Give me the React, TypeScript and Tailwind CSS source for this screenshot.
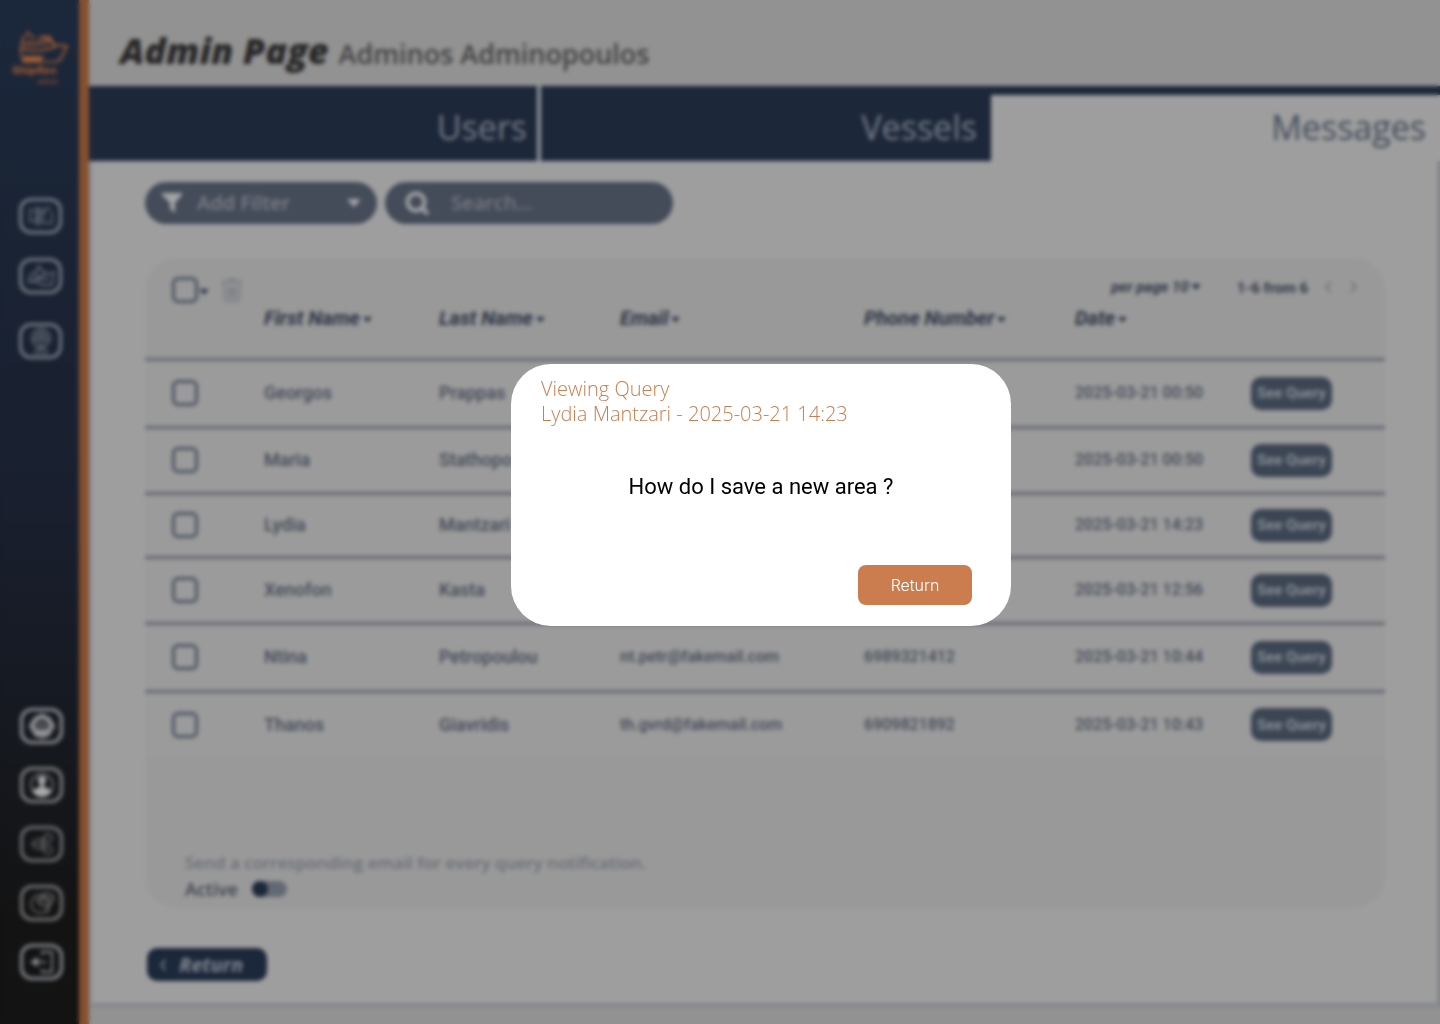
import React from "react";

const WORK = "font-['Open_Sans','Liberation_Sans',sans-serif]";

type Query = {
  first: string;
  last: string;
  email?: string;
  phone?: string;
  date: string;
  height: string;
};

const queries: Query[] = [
  { first: "Georgos", last: "Prappas", date: "2025-03-21 00:50", height: "h-[68px]" },
  { first: "Maria", last: "Stathopo", date: "2025-03-21 00:50", height: "h-[66px]" },
  { first: "Lydia", last: "Mantzari", date: "2025-03-21 14:23", height: "h-[64px]" },
  { first: "Xenofon", last: "Kasta", date: "2025-03-21 12:56", height: "h-[66px]" },
  { first: "Ntina", last: "Petropoulou", email: "nt.petr@fakemail.com", phone: "6989321412", date: "2025-03-21 10:44", height: "h-[68px]" },
  { first: "Thanos", last: "Giavridis", email: "th.gvrd@fakemail.com", phone: "6909821892", date: "2025-03-21 10:43", height: "h-[66px]" },
];

function Caret({ className = "w-2" }: { className?: string }) {
  return (
    <svg viewBox="0 0 10 6" className={className} fill="currentColor" aria-hidden="true">
      <path d="M0 0h10L5 6z" />
    </svg>
  );
}

function Logo() {
  return (
    <svg viewBox="0 0 60 58" className="h-[58px] w-[60px]" fill="none" stroke="#a05c34" aria-label="ShipRec" role="img">
      <path d="M10 20 11 11l4-3 2-4 3 4 5 2" strokeWidth="1.6" />
      <path d="M10 21q16 4 31-1l6-3 9 1-7 14-5 2" strokeWidth="2" />
      <path d="M9 20 12 34h32" strokeWidth="1.6" />
      <path d="M12 28h21l-3 6H13z" fill="#a05c34" stroke="none" />
      <path d="M14 19v-6M19 19v-7M24 19v-6M29 18v-7M29 9h9v6M34 9v9M38 9l6 9" strokeWidth="2.4" />
      <text x="1" y="46" fontFamily="Inter, sans-serif" fontSize="11" fontWeight="800" fill="#96552f" stroke="none">ShipRec</text>
      <text x="26" y="56" fontFamily="Inter, sans-serif" fontSize="7" fontWeight="600" fill="#7f4b2e" stroke="none">admin</text>
    </svg>
  );
}

function NavButton({ label, tone, children }: { label: string; tone: string; children: React.ReactNode }) {
  return (
    <button
      type="button"
      aria-label={label}
      className={"flex h-9 w-[43px] items-center justify-center rounded-xl border-3 border-current " + tone}
    >
      <svg viewBox="0 0 30 28" className="h-7 w-[30px] shrink-0" fill="none" stroke="currentColor" strokeWidth="1.8">
        {children}
      </svg>
    </button>
  );
}

function Sidebar() {
  return (
    <aside className="flex w-[89px] shrink-0 flex-col items-start border-r-10 border-[#85502f] bg-linear-to-b from-[#1b283b] via-[#191f2e] via-50% to-[#131313] to-90% pb-11 pl-[19px]">
      <a href="#home" className="-ml-2 mt-7">
        <Logo />
      </a>
      <nav aria-label="Sections" className="mt-28 flex flex-col gap-6">
        <NavButton label="Reports" tone="text-[#747a84]">
          <path d="M10 6h4v16h-4z" fill="currentColor" opacity="0.6" />
          <path d="M8 8H4v11h5M17 8v13h9V10M19 6v6M22 4l2 5M16 8l5-2" opacity="0.7" />
        </NavButton>
        <NavButton label="Vessels" tone="text-[#747a84]">
          <path d="m2 20 3-8 5-2 3-6 4 6 5 2 6-2-2 13H15l-3-3H3M6 17h17M9 12l4 4 8-6" opacity="0.8" />
        </NavButton>
        <div className="pt-[5px]">
          <NavButton label="Areas" tone="text-[#747a84]">
            <circle cx="15" cy="11" r="9" opacity="0.8" />
            <path d="M9 7h12M7 12h16M15 3v18M11 6v10M19 6v10M9 22h12M7 26h16" opacity="0.7" />
          </NavButton>
        </div>
      </nav>
      <nav aria-label="Account" className="ml-px mt-auto flex flex-col gap-[23px]">
        <NavButton label="Support" tone="text-[#8d8f92]">
          <circle cx="15" cy="14" r="9" strokeWidth="5" />
          <path d="M6 18h18l-3 6H9z" fill="currentColor" />
          <path d="M15 1v4M3 12v4M27 12v4M12 12v4M18 12v4M12 12h6M15 23v4" />
        </NavButton>
        <NavButton label="Profile" tone="text-[#7f8081]">
          <circle cx="15" cy="14" r="11" strokeWidth="1.4" />
          <circle cx="15" cy="9" r="4" fill="#aaaaaa" stroke="none" />
          <path d="M13 12h4v6h-4z" fill="#aaaaaa" stroke="none" />
          <path d="M5 20q5-4 10-4t10 4q-4 6-10 6t-10-6z" fill="#aaaaaa" stroke="none" />
        </NavButton>
        <NavButton label="Share" tone="text-[#707172]">
          <circle cx="11" cy="14" r="5" opacity="0.7" />
          <circle cx="21" cy="8" r="4" opacity="0.8" />
          <circle cx="21" cy="20" r="4" opacity="0.8" />
          <path d="M4 14h14M16 8v12M14 10l5-2M14 18l5 2" opacity="0.7" />
        </NavButton>
        <NavButton label="Statistics" tone="text-[#757677]">
          <circle cx="13" cy="15" r="9" opacity="0.8" />
          <path d="M13 9v7h8M16 5q9-3 11 5l-5 7-2 7M9 13l6-5M15 6l3 5 6-2" opacity="0.9" />
        </NavButton>
        <NavButton label="Log out" tone="text-[#868a90]">
          <path d="M15 7V4h10v20H15v-3" />
          <path d="M19 14H6" />
          <path d="m3 14 8-5v10z" fill="currentColor" stroke="none" />
        </NavButton>
      </nav>
    </aside>
  );
}

function Tabs() {
  const tab = "flex h-[75px] items-center justify-end text-[34px] font-normal";
  return (
    <div role="tablist" className="grid grid-cols-[452fr_450fr_449fr]">
      <button type="button" role="tab" aria-selected="false" className={tab + " border-r-4 border-[#8f949b] bg-[#1c2739] pr-[10px] pt-2 text-[#747b85]"}>Users</button>
      <button type="button" role="tab" aria-selected="false" className={tab + " bg-[#1c2739] pr-[14px] pt-2 text-[#747b85]"}>Vessels</button>
      <button type="button" role="tab" aria-selected="true" className={tab + " border-t-9 border-[#1c273a] bg-[#9e9e9e] pb-[2px] pr-[14px] text-[#454d5c]"}>Messages</button>
    </div>
  );
}

function Toolbar() {
  return (
    <div className="flex items-center gap-2">
      <button type="button" className="flex h-[42px] w-[232px] items-center rounded-full bg-[#444b59] px-4 text-xl font-semibold text-[#7b7f87]">
        <svg viewBox="0 0 22 22" className="w-[22px]" fill="#a3a4a6" aria-hidden="true">
          <path d="M1 1h20q1 1 0 2l-7 8v10l-5-4v-6L1 3q-1-1 0-2z" />
        </svg>
        <span className="ml-[14px]">Add Filter</span>
        <Caret className="ml-auto w-[14px] text-[#a3a4a6]" />
      </button>
      <label className="flex h-[42px] w-[288px] items-center rounded-full bg-[#444b59] pl-5">
        <svg viewBox="0 0 24 24" className="w-6 shrink-0" fill="none" stroke="#a3a4a6" strokeWidth="4" aria-hidden="true">
          <circle cx="11" cy="11" r="8.5" />
          <path d="m17 17 6 6" />
        </svg>
        <input
          type="search"
          aria-label="Search"
          placeholder="Search..."
          className="ml-[22px] w-full min-w-0 bg-transparent text-xl font-semibold outline-none placeholder:text-[#757981]"
        />
      </label>
    </div>
  );
}

function Check({ label }: { label: string }) {
  return (
    <input
      type="checkbox"
      aria-label={label}
      className="block size-[26px] appearance-none rounded-md border-3 border-[#4b5361]"
    />
  );
}

function Heading({ children }: { children: React.ReactNode }) {
  return (
    <th scope="col" className="p-0 text-left align-top">
      <button type="button" className="flex items-center gap-[3px] text-xl font-bold italic text-[#2b3444]">
        {children}
        <Caret className="mt-1 w-[9px]" />
      </button>
    </th>
  );
}

function QueryCard() {
  return (
    <section className="mt-[34px] flex h-[650px] flex-col rounded-[32px] bg-[#999999] font-[Roboto,sans-serif]">
      <div className="flex h-[46px] items-start pl-[27px] pr-[26px] pt-[19px] text-[#2f3848]">
        <Check label="Select all" />
        <Caret className="ml-px mt-3 w-[10px]" />
        <button type="button" aria-label="Delete selected" className="ml-3 text-[#7e8288]">
          <svg viewBox="0 0 22 26" className="h-[26px] w-[22px]" fill="none" stroke="currentColor" strokeWidth="2.6">
            <path d="M1 5h20M6 5l3-3h4l3 3M3 6l1 16q0 2 2 2h10q2 0 2-2l1-16M8 9v12M11 9v12M14 9v12" />
          </svg>
        </button>
        <button type="button" className="ml-auto flex items-center gap-[2px] text-[15px] font-bold italic leading-5">
          per page 10
          <Caret className="w-[10px]" />
        </button>
        <span className="ml-9 text-[15px] font-bold leading-[22px]">1-6 from 6</span>
        <button type="button" aria-label="Previous page" className="ml-4 mt-1 text-[#6c7078]">
          <svg viewBox="0 0 8 14" className="h-3 w-2" fill="none" stroke="currentColor" strokeWidth="2"><path d="M7 1 2 7l5 6" /></svg>
        </button>
        <button type="button" aria-label="Next page" className="ml-[18px] mr-px mt-1 text-[#6c7078]">
          <svg viewBox="0 0 8 14" className="h-3 w-2" fill="none" stroke="currentColor" strokeWidth="2"><path d="m1 1 5 6-5 6" /></svg>
        </button>
      </div>
      <table className="w-full table-fixed border-collapse">
        <colgroup>
          <col className="w-[119px]" />
          <col className="w-[175px]" />
          <col className="w-[181px]" />
          <col className="w-[244px]" />
          <col className="w-[211px]" />
          <col className="w-[176px]" />
          <col />
        </colgroup>
        <thead>
          <tr className="h-[55px]">
            <td />
            <Heading>First Name</Heading>
            <Heading>Last Name</Heading>
            <Heading>Email</Heading>
            <Heading>Phone Number</Heading>
            <Heading>Date</Heading>
            <td />
          </tr>
        </thead>
        <tbody className="bg-[#9b9b9b] font-medium text-[#434a58]">
          {queries.map((q) => (
            <tr key={q.first} className={"border-t-3 border-[#616670] " + q.height}>
              <td className="pl-[27px]">
                <Check label={"Select " + q.first + " " + q.last} />
              </td>
              <td className="text-lg">{q.first}</td>
              <td className="text-lg">{q.last}</td>
              <td className="text-base">{q.email}</td>
              <td className="text-base">{q.phone}</td>
              <td className="text-base">{q.date}</td>
              <td>
                <button type="button" className="h-[33px] w-[81px] whitespace-nowrap rounded-[10px] bg-[#3b4553] text-[15px] font-bold text-[#888e97]">
                  See Query
                </button>
              </td>
            </tr>
          ))}
        </tbody>
      </table>
      <div className={"mt-auto pb-[6px] pl-10 leading-[26px] " + WORK}>
        <p className="text-[17px] font-semibold text-[#6a6f77]">Send a corresponding email for every query notification.</p>
        <label className="flex items-center gap-[14px] text-lg font-semibold leading-[26px] text-[#3c4452]">
          Active
          <input
            type="checkbox"
            role="switch"
            className="h-4 w-[35px] appearance-none rounded-full bg-[#636973] before:block before:size-4 before:rounded-full before:bg-[#1b273a]"
          />
        </label>
      </div>
    </section>
  );
}

function QueryDialog() {
  return (
    <div className="fixed inset-0 flex items-center justify-center pb-[34px] pl-[82px] backdrop-blur-[2px]">
      <div role="dialog" aria-modal="true" aria-labelledby="query-title" className="flex h-[262px] w-[500px] flex-col rounded-[40px] bg-white pb-[21px] pl-[30px] pr-[39px] pt-3">
        <h2 id="query-title" className="text-xl font-light leading-[25px] text-[#cc7d50]">
          Viewing Query
          <br />
          Lydia Mantzari - 2025-03-21 14:23
        </h2>
        <p className="mt-[45px] pl-[9px] text-center font-[Roboto,sans-serif] text-[22px] leading-8 text-black">
          How do I save a new area ?
        </p>
        <button type="button" className="ml-auto mt-auto h-10 w-[114px] rounded-lg bg-[#cc7d50] font-[Inter,sans-serif] text-base font-light text-white">
          Return
        </button>
      </div>
    </div>
  );
}

export default function App() {
  return (
    <div className={"flex min-h-screen bg-[#929292] " + WORK}>
      <Sidebar />
      <main className="flex min-w-0 flex-1 flex-col pb-[17px]">
        <header className="flex h-[86px] items-baseline gap-[10px] pl-[31px] pt-[27px]">
          <h1 className="text-[36px] font-extrabold italic leading-[48px] text-[#272727]">Admin Page</h1>
          <p className="text-[27px] font-semibold leading-[48px] text-[#434343]">Adminos Adminopoulos</p>
        </header>
        <Tabs />
        <div className="flex-1 border-b-4 border-l-4 border-r-3 border-b-[#83868b] border-l-[#92949a] border-r-[#83868b] bg-[#9e9e9e] pl-[52px] pr-[52px] pt-[21px]">
          <Toolbar />
          <QueryCard />
          <button type="button" className="ml-[2px] mt-10 flex h-[33px] w-[120px] items-center gap-3 rounded-[10px] bg-[#1b273a] pl-3 text-xl font-bold italic text-[#7f858e]">
            <svg viewBox="0 0 8 14" className="h-3 w-2" fill="none" stroke="currentColor" strokeWidth="2" aria-hidden="true"><path d="M7 1 2 7l5 6" /></svg>
            Return
          </button>
        </div>
      </main>
      <QueryDialog />
    </div>
  );
}
